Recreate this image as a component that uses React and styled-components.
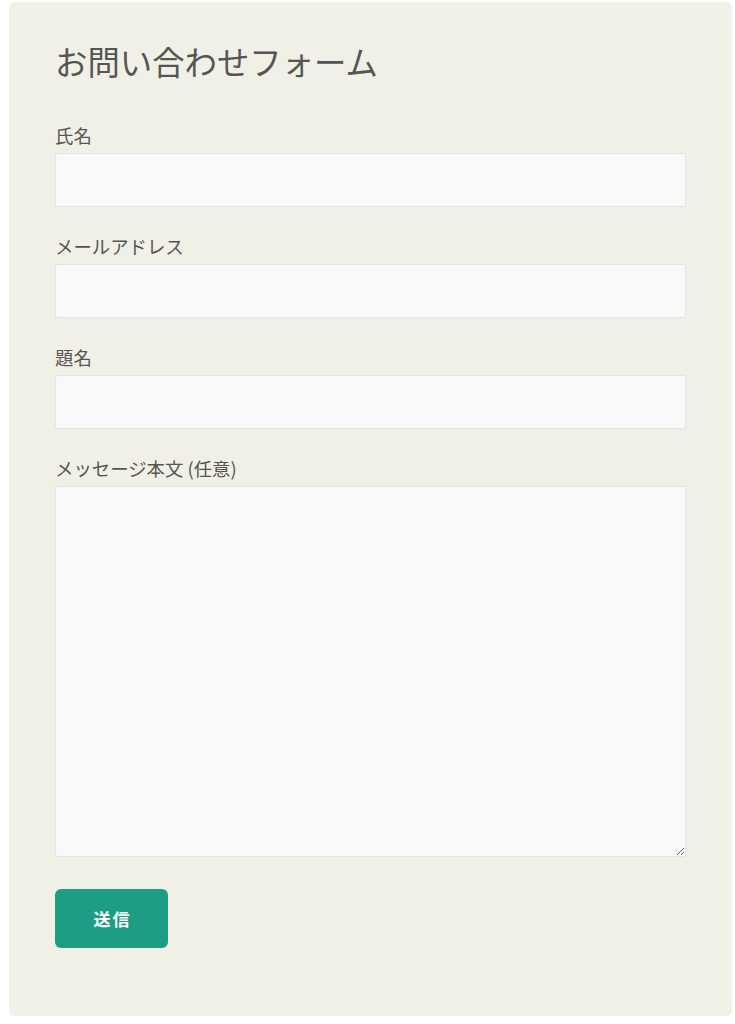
import React from 'react'
import styled, { createGlobalStyle } from 'styled-components'

const GlobalStyle = createGlobalStyle`
  body {
    margin: 0;
    background: #ffffff;
    font-family: "Noto Sans CJK JP", "Noto Sans", sans-serif;
  }
`;

const Page = styled.div`
  padding: 2px 3px 8px 9px;
`;

const Card = styled.form`
  width: 723px;
  box-sizing: border-box;
  background: #f1f0e6;
  border-radius: 6px;
  padding: 39px 46px 68px;
  color: #555;
`;

const Title = styled.h1`
  margin: 0 0 42px;
  font-size: 32.4px;
  line-height: 40px;
  font-weight: 400;
  color: #555;
`;

const Field = styled.div`
  margin-bottom: ${p => (p.last ? '32px' : '27px')};
`;

const Label = styled.label`
  display: block;
  font-size: 18.4px;
  line-height: 24px;
  margin-bottom: 6px;
  color: #555;
`;

const Input = styled.input`
  display: block;
  width: 100%;
  height: 54px;
  box-sizing: border-box;
  background: #f9f9f9;
  border: 1px solid #e4e4e2;
  border-radius: 2px;
  padding: 0 12px;
  font: inherit;
  outline: none;
`;

const TextArea = styled.textarea`
  display: block;
  width: 100%;
  height: 371px;
  box-sizing: border-box;
  background: #f9f9f9;
  border: 1px solid #e4e4e2;
  border-radius: 2px;
  padding: 10px 12px;
  font: inherit;
  resize: vertical;
  outline: none;
`;

const SubmitButton = styled.button`
  display: block;
  width: 113px;
  height: 59px;
  border: none;
  border-radius: 6px;
  background: #1d9e84;
  color: #ffffff;
  font-family: "Noto Sans CJK JP", sans-serif;
  font-size: 17px;
  font-weight: 700;
  letter-spacing: 2px;
  padding: 0 0 0 2px;
  cursor: pointer;
`;

const fields = [
  { id: 'name', label: '氏名', type: 'text' },
  { id: 'email', label: 'メールアドレス', type: 'email' },
  { id: 'subject', label: '題名', type: 'text' },
]

export default function App() {
  return (
    <Page>
      <GlobalStyle />
      <Card onSubmit={e => e.preventDefault()}>
        <Title>お問い合わせフォーム</Title>
        {fields.map(f => (
          <Field key={f.id}>
            <Label htmlFor={f.id}>{f.label}</Label>
            <Input id={f.id} type={f.type} />
          </Field>
        ))}
        <Field last>
          <Label htmlFor="message">メッセージ本文 (任意)</Label>
          <TextArea id="message" />
        </Field>
        <SubmitButton type="submit">送信</SubmitButton>
      </Card>
    </Page>
  )
}
